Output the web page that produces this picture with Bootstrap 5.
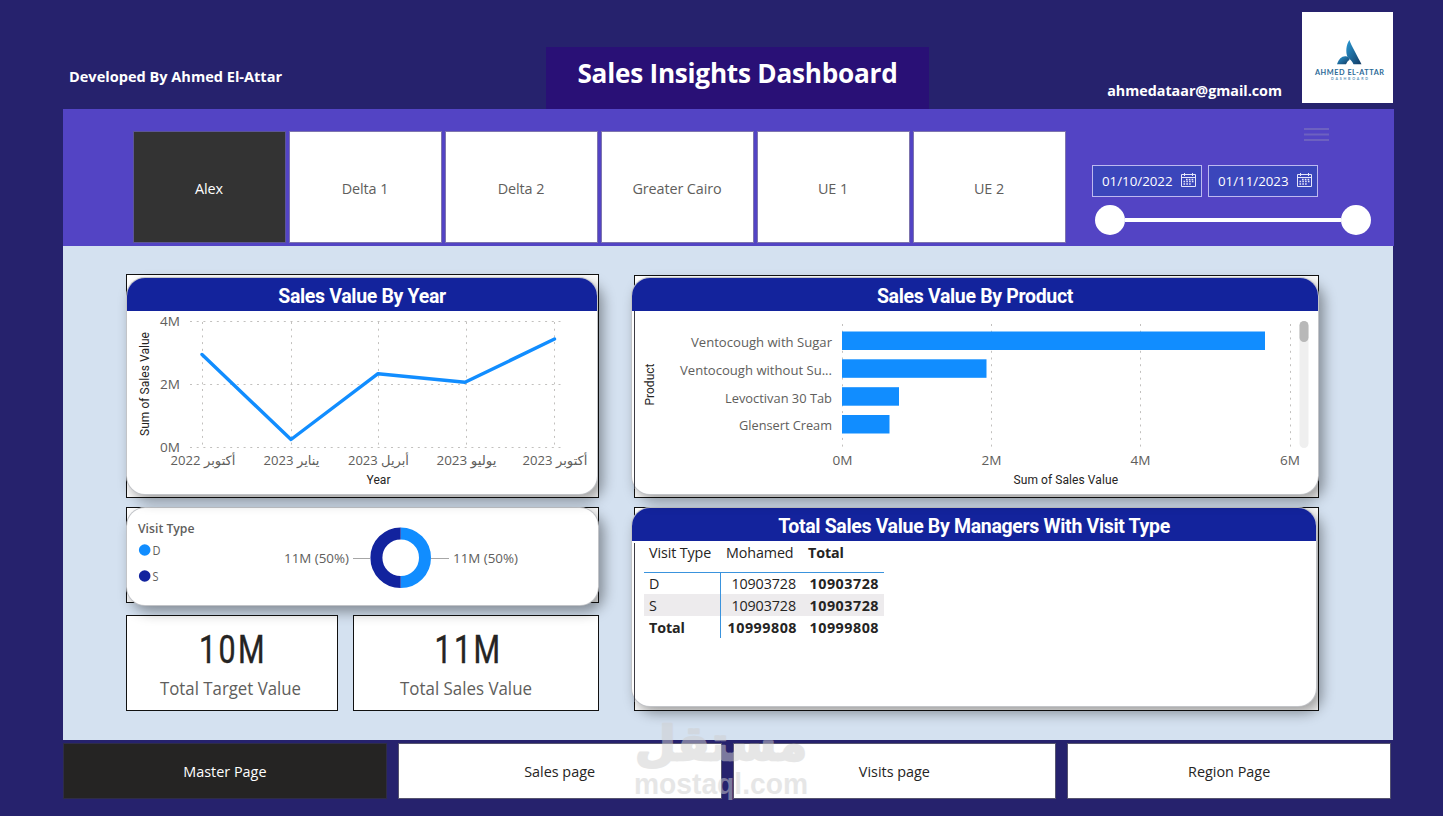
<!DOCTYPE html>
<html lang="en">
<head>
    <meta charset="UTF-8">
    <meta name="viewport" content="width=device-width, initial-scale=1.0">
    <link rel="icon" href="data:,">
    <title>Sales Insights Dashboard</title>
    <link href="https://cdn.jsdelivr.net/npm/bootstrap@5.3.0/dist/css/bootstrap.min.css" rel="stylesheet">
    <style>
        body {
            background-color: #26226d;
            font-family: "Open Sans", "Noto Sans", "DejaVu Sans", sans-serif;
            overflow: hidden;
        }
        svg { display: block; }
        svg text { white-space: pre; }
        .report {
            width: 1443px;
            height: 816px;
            padding-left: 63px;
        }

        /* header */
        .report-header { height: 109px; width: 1330px; }
        .author {
            width: 483px;
            padding: 66px 0 0 6px;
            font-size: 14.55px;
            line-height: 21px;
        }
        .report-title {
            width: 383px;
            height: 62px;
            margin-top: 47px;
            padding-top: 8px;
            background-color: #291076;
            font-size: 26.2px;
            line-height: 36px;
            letter-spacing: -.25px;
        }
        .mail {
            padding: 80px 20px 0 0;
            font-size: 14.3px;
            line-height: 21px;
        }
        .logo-box { width: 91px; height: 91px; margin-top: 12px; }

        /* slicers */
        .slicer-band {
            width: 1331px;
            height: 137px;
            padding: 22px 0 0 70px;
            background-color: #5344c4;
        }
        .tiles { gap: 3px; }
        .tile {
            width: 153px;
            height: 112px;
            padding: 3px 1px 0 0;
            border: 1px solid #7d74ae;
            color: #605e5c;
            font-size: 14.4px;
            letter-spacing: -.1px;
        }
        .tile.selected { background-color: #333 !important; color: #fff; border-color: #5c5596; }
        .date-slicer { width: 302px; padding-left: 26px; }
        .date-input {
            width: 110px;
            height: 32px;
            padding: 2px 5px 0 9px;
            border: 1px solid #bdb9f0;
            background-color: #3b46bb;
            font-size: 13.3px;
        }
        .slider { width: 276px; height: 30px; margin: 8px 0 0 3px; }
        .slider .knob { width: 30px; height: 30px; }

        /* report body */
        .canvas {
            width: 1330px;
            height: 494px;
            padding: 28px 0 0 63px;
            gap: 35px;
            background-color: #d4e1f0;
        }
        .left-col { width: 473px; }
        .right-col { width: 685px; padding-top: 1px; }
        .frame { border: 1px solid #111; background-color: #fff; }
        .visual {
            background-color: #fff;
            border-radius: 18px;
            box-shadow: 0 0 0 1px #c2c4c8, 5px 6px 13px 1px rgba(0, 0, 0, .38);
        }
        .visual-title {
            height: 33px;
            padding-top: 1px;
            border-radius: 18px 18px 0 0;
            background-color: #13239c;
            font-family: Roboto, sans-serif;
            font-size: 19.5px;
            line-height: 35px;
            letter-spacing: -.33px;
        }
        /* the frame's left edge stays visible over the card body */
        .right-col .frame::after {
            content: "";
            position: absolute;
            top: 35px;
            bottom: 8px;
            left: -1px;
            border-left: 1px solid #3c3c44;
        }
        .axis-label { font-size: 13px; fill: #605e5c; }
        .axis-title { font-family: Roboto, sans-serif; font-size: 12px; fill: #252423; }
        .gridline { stroke: #c2c0be; stroke-width: 1; stroke-dasharray: 2 4.700; }

        /* matrix */
        .matrix {
            width: 240px;
            margin: 0 0 0 12px;
            font-size: 14.3px;
            line-height: 20px;
            color: #252423;
            table-layout: fixed;
        }
        .matrix th, .matrix td { padding: 1px 6px 0 6px; white-space: nowrap; letter-spacing: -.1px; }
        .matrix thead th { height: 31px; vertical-align: top; padding-top: 2px; border-bottom: 1px solid #3a93dd; }
        .matrix thead th:first-child { padding-left: 5px; }
        .matrix tbody tr { height: 22px; }
        .matrix tbody td:first-child { padding-left: 5px; border-right: 1px solid #3a93dd; }
        .matrix .fw-bold.text-end, .matrix .fw-bold .text-end { letter-spacing: .5px; padding-right: 5px; }
        .matrix .banded { background-color: #edebed; }

        /* page navigation */
        .page-nav { width: 1328px; padding-top: 3px; gap: 11px; }
        .page-button {
            height: 56px;
            padding-top: 1px;
            border: 1px solid #55536f;
            background-color: #fff;
            color: #252423;
            font-size: 14.4px;
        }
        .page-button.current { background-color: #252423; color: #fff; border-color: #2e2c47; }
        .watermark { left: 630px; top: 700px; z-index: 10; }
    </style>
</head>
<body>
    <div class="report">
        <header class="report-header d-flex text-white fw-bold">
            <div class="author">Developed By Ahmed El-Attar</div>
            <h1 class="report-title mb-0 text-center fw-bold">Sales Insights Dashboard</h1>
            <div class="mail ms-auto">ahmedataar@gmail.com</div>
            <div class="logo-box bg-white">
                <svg width="91" height="91" viewBox="1302 12 91 91">
                    <defs>
                        <linearGradient id="logoBlue" x1="0" y1="0" x2="1" y2="1">
                            <stop offset="0" stop-color="#2b9bd6"/>
                            <stop offset="1" stop-color="#123a63"/>
                        </linearGradient>
                    </defs>
                    <path d="M1349.400 40C1351 45 1358 57 1361.500 64.300H1353.500C1352 61 1350 59.500 1347.500 57C1345.500 52 1346 45 1349.400 40Z" fill="url(#logoBlue)"/>
                    <path d="M1337 64.300C1339 58.500 1342 55.800 1346 56.300C1348.500 56.800 1349.500 58.500 1349.500 60C1347.500 60.500 1347 62.500 1346 64.300Z" fill="url(#logoBlue)"/>
                    <text x="1315" y="74.500" font-family="Lato, sans-serif" font-size="7.300" font-weight="bold" fill="#2b6a97" textLength="69">AHMED EL-ATTAR</text>
                    <text x="1331" y="80" font-family="Lato, sans-serif" font-size="3.600" font-weight="bold" fill="#5a93b8" textLength="37">DASHBOARD</text>
                </svg>
            </div>
        </header>

        <section class="slicer-band d-flex">
            <div class="tiles d-flex">
                <div class="tile selected d-flex align-items-center justify-content-center">Alex</div>
                <div class="tile bg-white d-flex align-items-center justify-content-center">Delta 1</div>
                <div class="tile bg-white d-flex align-items-center justify-content-center">Delta 2</div>
                <div class="tile bg-white d-flex align-items-center justify-content-center">Greater Cairo</div>
                <div class="tile bg-white d-flex align-items-center justify-content-center">UE 1</div>
                <div class="tile bg-white d-flex align-items-center justify-content-center">UE 2</div>
            </div>
            <div class="date-slicer">
                <svg class="overflow-visible" width="240" height="34" viewBox="1092 131 240 34">
                    <path d="M1304 129h25M1304 134.500h25M1304 140h25" stroke="#6d61c0" stroke-width="1.800"/>
                </svg>
                <div class="d-flex text-white" style="gap: 6px">
                    <div class="date-input d-flex align-items-center justify-content-between">
                        <span>01/10/2022</span>
                        <svg style="margin-bottom: 5px" width="15" height="14" viewBox="0 0 15 14" fill="none" stroke="#e6e6fa">
                            <path d="M.5 1.500h14v12h-14zM.5 4.500h14M3.500 0v3M11.500 0v3"/>
                            <path d="M5 6.500h8M2.500 8.500h10.500M2.500 11h8" stroke-width="1.400" stroke-dasharray="1.600 1.200"/>
                        </svg>
                    </div>
                    <div class="date-input d-flex align-items-center justify-content-between">
                        <span>01/11/2023</span>
                        <svg style="margin-bottom: 5px" width="15" height="14" viewBox="0 0 15 14" fill="none" stroke="#e6e6fa">
                            <path d="M.5 1.500h14v12h-14zM.5 4.500h14M3.500 0v3M11.500 0v3"/>
                            <path d="M5 6.500h8M2.500 8.500h10.500M2.500 11h8" stroke-width="1.400" stroke-dasharray="1.600 1.200"/>
                        </svg>
                    </div>
                </div>
                <div class="slider d-flex align-items-center">
                    <span class="knob rounded-circle bg-white"></span>
                    <span class="flex-grow-1 bg-white" style="height: 4px"></span>
                    <span class="knob rounded-circle bg-white"></span>
                </div>
            </div>
        </section>

        <main class="canvas d-flex">
            <div class="left-col">
                <div class="frame position-relative z-3" style="height: 224px">
                    <div class="visual" style="margin: 3px 1px 0 0; height: 216px">
                        <div class="visual-title text-white text-center fw-bold">Sales Value By Year</div>
                        <svg width="470" height="183" viewBox="127 311 470 183">
                            <path class="gridline" d="M190 321.500H561M190 384.500H561M190 447.500H561M202.500 322V447M291.500 322V447M378.500 322V447M466.500 322V447M554.500 322V447"/>
                            <polyline points="202,354.500 291,439.500 378,373.700 465,382.300 554.500,339" fill="none" stroke="#118dff" stroke-width="3.400" stroke-linejoin="round" stroke-linecap="round"/>
                            <g class="axis-label">
                                <text x="160" y="326" textLength="20" lengthAdjust="spacingAndGlyphs">4M</text>
                                <text x="160" y="389" textLength="20" lengthAdjust="spacingAndGlyphs">2M</text>
                                <text x="160" y="451.500" textLength="20" lengthAdjust="spacingAndGlyphs">0M</text>
                                <g text-anchor="middle">
                                    <text x="203" y="465" textLength="65" lengthAdjust="spacingAndGlyphs">أكتوبر 2022</text>
                                    <text x="291.500" y="465" textLength="56" lengthAdjust="spacingAndGlyphs">يناير 2023</text>
                                    <text x="378.500" y="465" textLength="61" lengthAdjust="spacingAndGlyphs">أبريل 2023</text>
                                    <text x="466.500" y="465" textLength="60" lengthAdjust="spacingAndGlyphs">يوليو 2023</text>
                                    <text x="555" y="465" textLength="65" lengthAdjust="spacingAndGlyphs">أكتوبر 2023</text>
                                </g>
                            </g>
                            <text class="axis-title" x="366.500" y="484" textLength="24">Year</text>
                            <text class="axis-title" transform="translate(149 436) rotate(-90)" textLength="104">Sum of Sales Value</text>
                        </svg>
                    </div>
                </div>

                <div class="frame position-relative z-2" style="height: 96px; margin-top: 9px">
                    <div class="visual" style="height: 97px">
                        <svg width="471" height="97" viewBox="127 508 471 97">
                            <text x="138" y="533" font-size="12.500" font-weight="600" fill="#605e5c" textLength="56.500" lengthAdjust="spacingAndGlyphs">Visit Type</text>
                            <circle cx="144.700" cy="550" r="5.800" fill="#118dff"/>
                            <circle cx="144.700" cy="576" r="5.800" fill="#12239e"/>
                            <g font-size="12.500" fill="#605e5c">
                                <text x="152.500" y="555" textLength="8" lengthAdjust="spacingAndGlyphs">D</text>
                                <text x="152.500" y="580.500" textLength="6" lengthAdjust="spacingAndGlyphs">S</text>
                            </g>
                            <path d="M353 558.500H370M431 558.500H449" stroke="#a6a6a6"/>
                            <path d="M400.700 533.500A24.300 24.300 0 0 1 400.700 582.100" fill="none" stroke="#118dff" stroke-width="12"/>
                            <path d="M400.700 533.500A24.300 24.300 0 0 0 400.700 582.100" fill="none" stroke="#12239e" stroke-width="12"/>
                            <g class="axis-label">
                                <text x="284" y="563" textLength="65" lengthAdjust="spacingAndGlyphs">11M (50%)</text>
                                <text x="453" y="563" textLength="65" lengthAdjust="spacingAndGlyphs">11M (50%)</text>
                            </g>
                        </svg>
                    </div>
                </div>

                <div class="d-flex" style="gap: 15px; margin-top: 12px">
                    <div class="frame" style="width: 212px; height: 96px">
                        <svg width="210" height="94" viewBox="127 616 210 94">
                            <text x="199" y="662.500" font-family="Roboto, sans-serif" font-size="38" fill="#252423" stroke="#252423" stroke-width=".4" textLength="68" lengthAdjust="spacingAndGlyphs" letter-spacing="3">10M</text>
                            <text x="160" y="695" font-size="18" fill="#605e5c" textLength="141" lengthAdjust="spacingAndGlyphs">Total Target Value</text>
                        </svg>
                    </div>
                    <div class="frame" style="width: 246px; height: 96px">
                        <svg width="244" height="94" viewBox="354 616 244 94">
                            <text x="434.500" y="662.500" font-family="Roboto, sans-serif" font-size="38" fill="#252423" stroke="#252423" stroke-width=".4" textLength="68" lengthAdjust="spacingAndGlyphs" letter-spacing="3">11M</text>
                            <text x="400" y="695" font-size="18" fill="#605e5c" textLength="132" lengthAdjust="spacingAndGlyphs">Total Sales Value</text>
                        </svg>
                    </div>
                </div>
            </div>

            <div class="right-col">
                <div class="frame position-relative z-3" style="height: 223px">
                    <div class="visual" style="margin: 2px 0 0 -3px; height: 216px">
                        <div class="visual-title text-white text-center fw-bold">Sales Value By Product</div>
                        <svg width="686" height="183" viewBox="632 311 686 183">
                            <path class="gridline" d="M842.500 324V449M991.500 324V449M1140.500 324V449M1290.500 324V449"/>
                            <g fill="#118dff">
                                <rect x="842" y="331.500" width="423" height="18.500"/>
                                <rect x="842" y="359.300" width="144.500" height="18.500"/>
                                <rect x="842" y="387.200" width="57" height="18.500"/>
                                <rect x="842" y="415" width="47.500" height="18.500"/>
                            </g>
                            <g class="axis-label">
                                <text x="691" y="347" textLength="141" lengthAdjust="spacingAndGlyphs">Ventocough with Sugar</text>
                                <text x="680" y="375" textLength="152" lengthAdjust="spacingAndGlyphs">Ventocough without Su...</text>
                                <text x="725" y="403" textLength="107" lengthAdjust="spacingAndGlyphs">Levoctivan 30 Tab</text>
                                <text x="739" y="430" textLength="93" lengthAdjust="spacingAndGlyphs">Glensert Cream</text>
                                <text x="832.500" y="465" textLength="20" lengthAdjust="spacingAndGlyphs">0M</text>
                                <text x="981.500" y="465" textLength="20" lengthAdjust="spacingAndGlyphs">2M</text>
                                <text x="1130.500" y="465" textLength="20" lengthAdjust="spacingAndGlyphs">4M</text>
                                <text x="1280" y="465" textLength="20" lengthAdjust="spacingAndGlyphs">6M</text>
                            </g>
                            <text class="axis-title" x="1013.500" y="484" textLength="104.500">Sum of Sales Value</text>
                            <text class="axis-title" transform="translate(654 405.500) rotate(-90)" textLength="42">Product</text>
                            <rect x="1299.500" y="321" width="9" height="127" rx="4.500" fill="#efefef"/>
                            <rect x="1299.500" y="321" width="9" height="21" rx="4.500" fill="#b8b8b8"/>
                        </svg>
                    </div>
                </div>

                <div class="frame position-relative z-2" style="height: 204px; margin-top: 9px">
                    <div class="visual" style="margin: 0 2px 0 -3px; height: 198px">
                        <div class="visual-title text-white text-center fw-bold">Total Sales Value By Managers With Visit Type</div>
                        <table class="matrix">
                            <colgroup>
                                <col style="width: 76px">
                                <col style="width: 82px">
                                <col style="width: 82px">
                            </colgroup>
                            <thead>
                                <tr>
                                    <th class="fw-normal">Visit Type</th>
                                    <th class="fw-normal">Mohamed</th>
                                    <th>Total</th>
                                </tr>
                            </thead>
                            <tbody>
                                <tr>
                                    <td>D</td>
                                    <td class="text-end">10903728</td>
                                    <td class="text-end fw-bold">10903728</td>
                                </tr>
                                <tr class="banded">
                                    <td>S</td>
                                    <td class="text-end">10903728</td>
                                    <td class="text-end fw-bold">10903728</td>
                                </tr>
                                <tr class="fw-bold">
                                    <td>Total</td>
                                    <td class="text-end">10999808</td>
                                    <td class="text-end">10999808</td>
                                </tr>
                            </tbody>
                        </table>
                    </div>
                </div>
            </div>
        </main>

        <nav class="page-nav d-flex">
            <a class="page-button current flex-fill w-100 d-flex align-items-center justify-content-center text-decoration-none" href="#">Master Page</a>
            <a class="page-button flex-fill w-100 d-flex align-items-center justify-content-center text-decoration-none" href="#">Sales page</a>
            <a class="page-button flex-fill w-100 d-flex align-items-center justify-content-center text-decoration-none" href="#">Visits page</a>
            <a class="page-button flex-fill w-100 d-flex align-items-center justify-content-center text-decoration-none" href="#">Region Page</a>
        </nav>
    </div>

    <svg class="watermark position-absolute pe-none" width="184" height="106" viewBox="630 700 184 106" fill="#cfcfcf" opacity=".5">
        <text x="721" y="760" text-anchor="middle" font-family="DejaVu Sans, sans-serif" font-weight="bold" font-size="48" stroke="#cfcfcf" stroke-width="2.500" stroke-linejoin="round" textLength="172" lengthAdjust="spacingAndGlyphs">مستقل</text>
        <text x="634" y="794" font-family="Liberation Sans, sans-serif" font-weight="bold" font-size="29" textLength="174" lengthAdjust="spacingAndGlyphs">mostaql.com</text>
    </svg>

    <script src="https://cdn.jsdelivr.net/npm/bootstrap@5.3.0/dist/js/bootstrap.bundle.min.js"></script>
</body>
</html>
